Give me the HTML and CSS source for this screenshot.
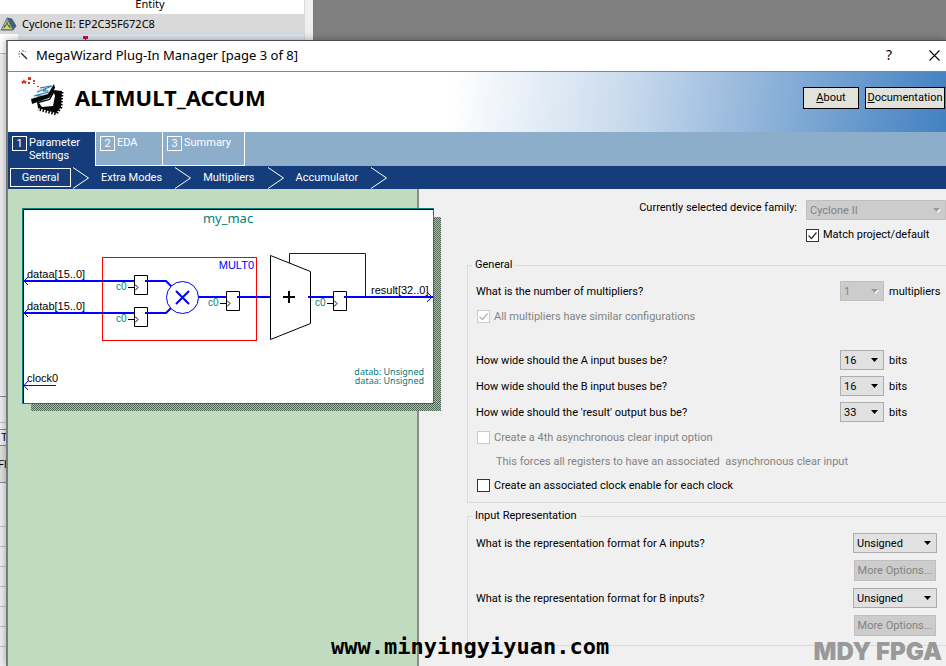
FILE: index.html
```html
<!DOCTYPE html>
<html lang="en">
<head>
<meta charset="utf-8">
<title>MegaWizard Plug-In Manager</title>
<link rel="stylesheet" href="styles.css">
</head>
<body>
<div class="backdrop">
  <div class="navigator">
    <div class="nav-head">Entity</div>
    <div class="nav-device">
      <svg width="17" height="14" viewBox="0 0 17 14" aria-hidden="true"><path d="M7 .5 L12 1.5 L16.5 9 L13 13.5 H.5 Z" fill="#41617c"/><path d="M7 1.5 L12.5 12.5 H1.5 Z" fill="#d5d66c" stroke="#698391"/><path d="M7 4v3M5 10l2-4 2 4M4 11l1-3M10 11l-1-3" stroke="#456451" fill="none"/></svg>
      <span>Cyclone II: EP2C35F672C8</span>
    </div>
    <div class="nav-selected"><svg width="6" height="6" viewBox="0 0 6 6" aria-hidden="true"><path d="M0 1h5v3H0z" fill="#c3173e"/><path d="M2 4h1v2H2z" fill="#334"/></svg></div>
  </div>
  <div class="side-pane">
    <div class="side-top"></div>
    <div class="side-mid"></div>
    <div class="side-gap"></div>
    <div class="side-tab">T</div>
    <div class="side-flow">Flo</div>
    <div class="side-blank"></div>
    <div class="side-rows"></div>
  </div>
</div>

<main class="dialog">
  <header class="titlebar">
    <svg width="10" height="10" viewBox="0 0 10 10" aria-hidden="true"><path d="M3 3l6 6" stroke="#222" stroke-width="1.3"/><path d="M1 1l1 1M5 0v2M0 4h2M1 7l1-1M7 2l1-1" stroke="#777"/></svg>
    <h1 class="window-title">MegaWizard Plug-In Manager [page 3 of 8]</h1>
    <button class="win-btn" aria-label="Help">?</button>
    <button class="win-btn" aria-label="Close"><svg width="11" height="11" viewBox="0 0 11 11"><path d="M.5 .5l10 10M10.500 .5l-10 10" stroke="#000" stroke-width="1.1"/></svg></button>
  </header>

  <div class="banner">
    <svg width="46" height="42" viewBox="0 0 46 42" aria-hidden="true">
      <path d="M33 13 L42 14 L41 30 L36 36 L18 31 L17 25 L29 22 Z" fill="#050505"/>
      <path d="M42 15l-1 15-5 7-18-5" fill="none" stroke="#050505" stroke-width="3" stroke-dasharray="1.500 1.500"/>
      <path d="M19 26 L30 23 L34 16 L35 19 L33 29 L22 30 Z" fill="#fff"/>
      <path d="M11 22 L20 10 L34 7 L28 17 Z" fill="#e4f3f9"/>
      <path d="M17 15l15-6M20 11l11-2M14 19l15-4M19 17l-2 2h5M26 12l-3 2h5" stroke="#276f9f" fill="none"/>
      <path d="M11 22 L28 17 L34 7 L35 11 L29 21 L12 27 Z" fill="#050505"/>
      <path d="M1 4h2l1-2 1 2h2L6 5l0 2-2-1-2 1 0-2zM8 0h3v3H8zM8 5h2v2H8zM13 3h2v2h-2zM13 6h2v1h-2zM17 9h2v1h-2z" fill="#df3321"/>
    </svg>
    <h2 class="product">ALTMULT_ACCUM</h2>
    <div class="banner-actions">
      <button class="flat-btn"><u>A</u>bout</button>
      <button class="flat-btn flat-btn-wide"><u>D</u>ocumentation</button>
    </div>
  </div>

  <nav class="tabs" aria-label="Pages">
    <button class="tab tab-active"><span class="num">1</span><span>Parameter<br>Settings</span></button>
    <button class="tab tab-eda"><span class="num">2</span><span>EDA</span></button>
    <button class="tab tab-last"><span class="num">3</span><span>Summary</span></button>
  </nav>

  <nav class="steps" aria-label="Parameter settings">
    <button class="step step-active">General</button>
    <svg class="chevron" width="16" height="22" viewBox="0 0 16 22" aria-hidden="true"><path d="M0 .5l15.500 10.500L0 21.500"/></svg>
    <button class="step">Extra Modes</button>
    <svg class="chevron" width="16" height="22" viewBox="0 0 16 22" aria-hidden="true"><path d="M0 .5l15.500 10.500L0 21.500"/></svg>
    <button class="step">Multipliers</button>
    <svg class="chevron" width="16" height="22" viewBox="0 0 16 22" aria-hidden="true"><path d="M0 .5l15.500 10.500L0 21.500"/></svg>
    <button class="step">Accumulator</button>
    <svg class="chevron" width="16" height="22" viewBox="0 0 16 22" aria-hidden="true"><path d="M0 .5l15.500 10.500L0 21.500"/></svg>
  </nav>

  <div class="content">
    <section class="preview">
      <svg class="diagram" width="419" height="203" viewBox="22 208 419 203" role="img" aria-label="my_mac block diagram">
        <defs>
          <pattern id="dither" width="2" height="2" patternUnits="userSpaceOnUse"><path d="M0 0h1v1H0zM1 1h1v1H1z" fill="#4f6654"/></pattern>
          <g id="reg"><path d="M.5 .5h13v19H.5z" fill="#fff" stroke="#000"/><path d="M-6 12.500H0M1 9.500l3 3-3 3" fill="none" stroke="#000"/></g>
        </defs>
        <path d="M434 217h7v194H31v-7h403z" fill="#a9c2ab"/>
        <path d="M434 217h7v194H31v-7h403z" fill="url(#dither)"/>
        <rect x="22.500" y="208.500" width="411" height="195" fill="#fff" stroke="#008080"/>
        <path d="M23.500 403V209.500H433" fill="none" stroke="#000"/>
        <text class="d-title" x="228" y="223">my_mac</text>
        <rect x="102.500" y="257.500" width="154" height="83" fill="none" stroke="#f00"/>
        <path class="bus" d="M24 281H134M24 313H134M198 297H226M240 297H270M310 297H333M347 297H433"/>
        <path class="wire" d="M28 277l-4 4 4 4M28 309l-4 4 4 4M56 385.500H24M28 381l-4 4.500 4 4.500M427 292l5 5-5 5M289.500 263V253.500H365.500V297"/>
        <use href="#reg" x="134" y="275"/><use href="#reg" x="134" y="307"/>
        <use href="#reg" x="226" y="291"/><use href="#reg" x="333" y="291"/>
        <path class="bus" d="M145 281H166L172 287M145 313H166L172 307M237 297H242M344 297H350"/>
        <circle cx="182.500" cy="297.500" r="16" fill="#fff" stroke="#00f"/>
        <path class="bus" d="M176 291l13 13M189 291l-13 13"/>
        <path d="M270.500 255.500L310.500 271.500V323.500L270.500 339.500Z" fill="#fff" stroke="#000"/>
        <path class="bus" d="M308 297h4"/>
        <path d="M283 297h12M289 291v12" stroke="#000" stroke-width="2"/>
        <g class="port"><text x="27" y="278">dataa[15..0]</text><text x="27" y="310">datab[15..0]</text><text x="27" y="382">clock0</text><text x="371" y="294">result[32..0]</text></g>
        <text class="mult" x="254" y="269">MULT0</text>
        <g class="clk"><text x="116" y="290">c0</text><text x="116" y="322">c0</text><text x="208" y="306">c0</text><text x="315" y="306">c0</text></g>
        <g class="note"><text x="424" y="375">datab: Unsigned</text><text x="424" y="384">dataa: Unsigned</text></g>
      </svg>
    </section>

    <form class="settings">
      <div class="family">
        <label for="family">Currently selected device family:</label>
        <select id="family" disabled><option>Cyclone II</option></select>
        <label class="check family-check"><input type="checkbox" checked>Match project/default</label>
      </div>

      <fieldset class="general">
        <legend>General</legend>
        <div class="row"><label for="count">What is the number of multipliers?</label><select id="count" disabled><option>1</option></select><span class="unit">multipliers</span></div>
        <label class="check check-off check-last"><input type="checkbox" checked disabled>All multipliers have similar configurations</label>
        <div class="row"><label for="wa">How wide should the A input buses be?</label><select id="wa"><option>16</option></select><span class="unit">bits</span></div>
        <div class="row"><label for="wb">How wide should the B input buses be?</label><select id="wb"><option>16</option></select><span class="unit">bits</span></div>
        <div class="row"><label for="wr">How wide should the 'result' output bus be?</label><select id="wr"><option>33</option></select><span class="unit">bits</span></div>
        <label class="check check-off"><input type="checkbox" disabled>Create a 4th asynchronous clear input option</label>
        <p class="hint">This forces all registers to have an associated&nbsp; asynchronous clear input</p>
        <label class="check"><input type="checkbox">Create an associated clock enable for each clock</label>
      </fieldset>

      <fieldset class="representation">
        <legend>Input Representation</legend>
        <label for="fa">What is the representation format for A inputs?</label>
        <select id="fa"><option>Unsigned</option></select>
        <button type="button" class="more" disabled>More Options...</button>
        <label for="fb">What is the representation format for B inputs?</label>
        <select id="fb"><option>Unsigned</option></select>
        <button type="button" class="more" disabled>More Options...</button>
      </fieldset>
    </form>
  </div>
</main>
<div class="mark mark-site">www.minyingyiyuan.com</div>
<div class="mark mark-brand">MDY FPGA</div>
</body>
</html>
```
FILE: styles.css
```css
* { box-sizing: border-box; }
body {
  margin: 0;
  height: 100vh;
  overflow: hidden;
  position: relative;
  background: #808080;
  color: #000;
  font: 11px/16px Roboto, "Liberation Sans", sans-serif;
}
button, select, input { font: inherit; color: inherit; margin: 0; }
button { padding: 0; border: 0; background: none; }
h1, h2, p { margin: 0; font-weight: normal; }

/* Application behind the dialog */
.backdrop { width: 313px; height: 100%; background: #f0f0f0; }
.navigator { width: 305px; height: 54px; background: #fff; border-right: 1px solid #d8d8d8; border-bottom: 1px solid #b8b8b8; font-family: "Noto Sans", sans-serif; }
.nav-head { height: 14px; line-height: 8px; padding-right: 4px; text-align: center; }
.nav-device { display: flex; align-items: center; gap: 5px; height: 20px; background: #d9d9d9; }
.nav-selected { height: 19px; margin-left: 18px; padding-left: 65px; line-height: 6px; background: #dae6f2; }
.side-pane { width: 7px; overflow: hidden; }
.side-top { height: 343px; border-bottom: 1px solid #858a90; }
.side-mid { height: 26px; border-bottom: 1px solid #c4c4c4; }
.side-gap { height: 7px; border-bottom: 1px solid #858a90; }
.side-tab { height: 16px; padding-left: 1px; border-bottom: 1px solid #858a90; }
.side-flow { height: 37px; line-height: 38px; border-bottom: 1px solid #858a90; background: #e2e2e2; text-indent: -2px; }
.side-blank { height: 44px; border-bottom: 1px solid #c4c4c4; }
.side-rows { height: 140px; background: repeating-linear-gradient(#f0f0f0 0 19px, #c4c4c4 19px 20px); }

/* Dialog window */
.dialog {
  position: absolute;
  inset: 40px 0 0 6px;
  display: flex;
  flex-direction: column;
  border: solid #4f4f4f;
  border-width: 1px 0 0;
  border-left: 2px solid #787b80;
  background: #f0f0f0;
  box-shadow: 0 0 8px rgba(0, 0, 0, .35);
}
.titlebar {
  display: flex;
  align-items: center;
  flex: 0 0 31px;
  padding: 0 6px 2px 10px;
  background: #fff;
  border-bottom: 1px solid #7f858b;
}
.window-title { flex: 1; margin-left: 8px; font: 13px/18px "Noto Sans", sans-serif; }
.win-btn { width: 12px; height: 20px; margin-left: 33px; font: 14px/20px "Noto Sans", sans-serif; text-align: center; }
.win-btn svg { display: block; margin: auto; }

.banner {
  display: flex;
  align-items: center;
  flex: 0 0 60px;
  padding: 0 1px 9px 12px;
  background: linear-gradient(98deg, #fff 47%, #cbdcee 65%, #9cbcde 77%, #4281c1 100%);
}
.product { margin-left: 9px; font: bold 22px/30px "Noto Sans", sans-serif; padding-bottom: 2px; }
.banner-actions { display: flex; gap: 6px; margin-left: auto; }
.flat-btn { width: 56px; height: 22px; border: 1px solid #000; background: #e1e2dc; white-space: nowrap; }
.flat-btn-wide { width: 80px; }

.tabs { display: flex; flex: 0 0 34px; background: #8daecb; color: #fff; }
.tab {
  display: flex;
  align-items: flex-start;
  gap: 2px;
  width: 82px;
  padding: 4px 3px 0 4px;
  line-height: 13px;
  text-align: left;
  border: solid #fff;
  border-width: 0 0 1px 1px;
}
.tab-active { width: 87px; border: 0; background: #153d7b; }
.tab-eda { width: 67px; }
.tab-last { border-right-width: 1px; width: 83px; }
.num { width: 15px; height: 15px; border: 1px solid #fff; text-align: center; }

.steps { display: flex; align-items: center; flex: 0 0 23px; padding-left: 2px; background: #153d7b; color: #fff; }
.step { height: 19px; padding: 1px 13px 0 12px; }
.step-active { width: 61px; margin-right: 2px; padding: 0; border: 1px solid #fff; }
.chevron { fill: none; stroke: #fff; }

.content { display: flex; flex: 1; min-height: 0; }
.preview {
  flex: 0 0 411px;
  min-width: 0;
  padding: 19px 0 0 14px;
  background: #c0dcc0;
  border-right: 2px solid #8c8c8c;
}
.diagram { display: block; position: relative; z-index: 1; }
.diagram text { font: 11px "Liberation Sans", sans-serif; }
.diagram .d-title { font: 13px "Noto Sans", sans-serif; fill: #008080; text-anchor: middle; }
.diagram .mult { fill: #00f; text-anchor: end; }
.diagram .clk text { font-size: 10px; fill: #008080; }
.diagram .note text { font: 9px "Noto Sans", sans-serif; fill: #008080; text-anchor: end; }
.bus { fill: none; stroke: #00f; stroke-width: 2; }
.wire { fill: none; stroke: #00f; }

.settings { flex: 1; min-width: 0; padding: 11px 0 0 48px; }
.family { display: grid; grid-template-columns: auto 140px; column-gap: 9px; justify-content: end; line-height: 16px; }
.family-check { grid-column: 2; margin-top: 3px; }

select {
  appearance: none;
  height: 20px;
  padding: 1px 3px 0;
  border: 1px solid #adadad;
  border-radius: 0;
  background: #e1e1e1 url("data:image/svg+xml,%3Csvg xmlns='http://www.w3.org/2000/svg' width='7' height='4'%3E%3Cpath d='M0 0h7L3.500 4z'/%3E%3C/svg%3E") no-repeat right 5px center;
}
select:disabled {
  opacity: 1;
  color: #838383;
  border-color: #bfbfbf;
  background: #ccc url("data:image/svg+xml,%3Csvg xmlns='http://www.w3.org/2000/svg' width='8' height='5'%3E%3Cpath d='M1 1h7L4.500 5z' fill='white'/%3E%3Cpath d='M0 0h7L3.500 4z' fill='%23999'/%3E%3C/svg%3E") no-repeat right 4px center;
}

fieldset { min-width: 0; margin: 0; padding: 0 0 0 8px; border: 1px solid #dcdcdc; border-right: 0; }
legend { margin-left: -4px; padding: 0 3px; }
.general { margin-top: 10px; padding-top: 5px; padding-bottom: 5px; }
.row { display: flex; align-items: center; height: 26px; }
.row label { flex: 1; padding-top: 2px; }
.row select { width: 44px; }
.unit { width: 57px; margin-left: 5px; padding-top: 2px; }
.check { display: flex; align-items: center; gap: 4px; height: 24px; }
.general .check { padding-left: 1px; padding-top: 1px; }
.check-off, .hint { color: #838383; }
.check-last { margin-bottom: 19px; }
.hint { height: 24px; padding-left: 20px; line-height: 26px; }
input[type="checkbox"] {
  appearance: none;
  width: 13px;
  height: 13px;
  border: 1px solid #333;
  background: #fff;
}
input[type="checkbox"]:checked {
  background: #fff url("data:image/svg+xml,%3Csvg xmlns='http://www.w3.org/2000/svg' width='11' height='11'%3E%3Cpath d='M1.500 5.500l3 3 5-6' fill='none' stroke='%23333' stroke-width='1.3'/%3E%3C/svg%3E") center no-repeat;
}
input[type="checkbox"]:disabled { border-color: #ccc; }
input[type="checkbox"]:checked:disabled {
  background-image: url("data:image/svg+xml,%3Csvg xmlns='http://www.w3.org/2000/svg' width='11' height='11'%3E%3Cpath d='M1.500 5.500l3 3 5-6' fill='none' stroke='%23b5b5b5' stroke-width='1.3'/%3E%3C/svg%3E");
}

.representation {
  display: grid;
  grid-template-columns: 1fr 84px;
  gap: 7px 0;
  margin-top: 5px;
  padding: 9px 9px 9px 8px;
}
.representation label { height: 20px; line-height: 22px; }
.more { grid-column: 2; height: 21px; margin: 0 1px; padding-top: 1px; border: 1px solid #bfbfbf; background: #ccc; color: #838383; white-space: nowrap; }

/* Watermarks lying over the window */
.mark { position: absolute; white-space: nowrap; }
.mark-site { left: 331px; bottom: 6px; font: bold 22px/26px "DejaVu Sans Mono", monospace; }
.mark-brand { right: 4px; bottom: 0; font: 900 24px/28px Inter, sans-serif; color: #999; }
```
